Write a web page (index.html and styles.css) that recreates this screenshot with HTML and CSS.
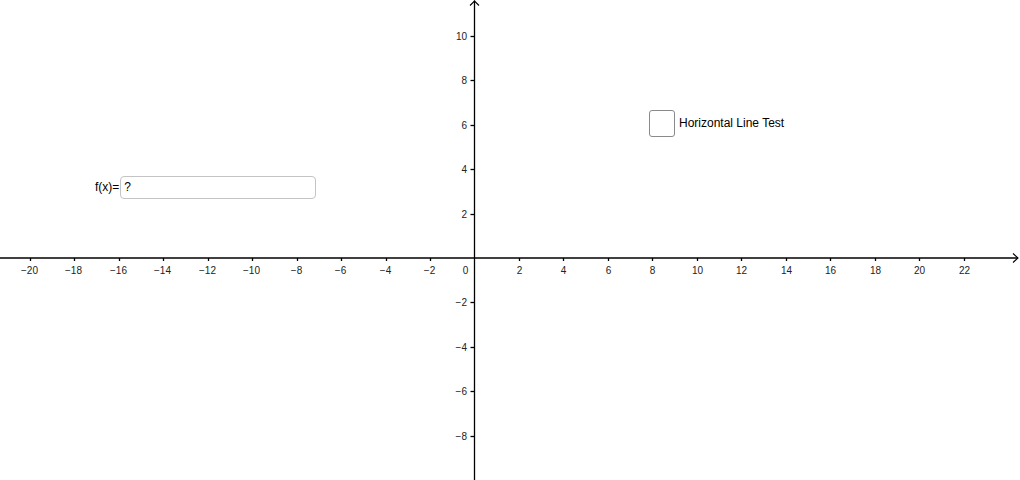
FILE: index.html
```html
<!DOCTYPE html>
<html>
<head>
<meta charset="utf-8">
<link rel="stylesheet" href="styles.css">
</head>
<body>
<div class="applet">
  <svg class="graph" width="1020" height="480" viewBox="0 0 1020 480" xmlns="http://www.w3.org/2000/svg">
    <g class="axes">
      <line x1="0" y1="258" x2="1018" y2="258"/>
      <line x1="474.5" y1="0.5" x2="474.5" y2="480"/>
      <polyline points="1013,253.5 1018,258 1013,262.5" class="arrow"/>
      <polyline points="470,5.5 474.5,1 479,5.5" class="arrow"/>
    </g>
    <g class="ticks" id="ticks"></g>
    <g class="labels" id="labels"></g>
  </svg>

  <div class="input-widget">
    <span class="input-label">f(x)=</span>
    <div class="input-box">?</div>
  </div>

  <label class="check-widget">
    <span class="check-box"></span>
    <span class="check-label">Horizontal Line Test</span>
  </label>
</div>
<script src="script.js"></script>
</body>
</html>
```

FILE: script.js
```js
(function () {
  var ns = "http://www.w3.org/2000/svg";
  var ox = 474.5, oy = 258, u = 22.23;
  var ticks = document.getElementById("ticks");
  var labels = document.getElementById("labels");
  function line(x1, y1, x2, y2) {
    var l = document.createElementNS(ns, "line");
    l.setAttribute("x1", x1); l.setAttribute("y1", y1);
    l.setAttribute("x2", x2); l.setAttribute("y2", y2);
    ticks.appendChild(l);
  }
  function text(x, y, s, anchor) {
    var t = document.createElementNS(ns, "text");
    t.setAttribute("x", x); t.setAttribute("y", y);
    t.setAttribute("text-anchor", anchor);
    t.textContent = s;
    labels.appendChild(t);
  }
  function fmt(v) { return v < 0 ? "\u2212" + (-v) : String(v); }
  for (var k = -20; k <= 22; k += 2) {
    if (k === 0) continue;
    var x = Math.round(ox + k * u) + 0.5;
    line(x, oy, x, oy + 3);
    text(x - (k < 0 ? 1 : 0), oy + 16, fmt(k), "middle");
  }
  for (var j = -8; j <= 10; j += 2) {
    if (j === 0) continue;
    var y = Math.round(oy - j * u) + 0.5;
    line(ox - 4, y, ox, y);
    text(ox - 7.5, y + 3.5, fmt(j), "end");
  }
  text(465.5, oy + 16, "0", "middle");
})();
```

FILE: styles.css
```css
html, body {
  margin: 0;
  padding: 0;
  background: #ffffff;
}

.applet {
  position: relative;
  width: 1020px;
  height: 480px;
  overflow: hidden;
  background: #ffffff;
  font-family: "Liberation Sans", Arial, sans-serif;
}

.graph {
  display: block;
}

.axes line,
.ticks line {
  stroke: #000000;
  stroke-width: 1.3;
  fill: none;
}

.arrow {
  stroke: #000000;
  stroke-width: 1.1;
  fill: none;
}

.labels text {
  font-family: "Liberation Sans", Arial, sans-serif;
  font-size: 10px;
  fill: #222222;
}

.input-widget {
  position: absolute;
  left: 95px;
  top: 175px;
  display: flex;
  align-items: center;
  gap: 1px;
  font-size: 12px;
  color: #000000;
}

.input-label {
  line-height: 24px;
}

.input-box {
  box-sizing: border-box;
  width: 196px;
  height: 23px;
  border: 1px solid #c4c4c4;
  border-radius: 4px;
  padding: 0 0 0 3px;
  line-height: 21px;
  background: #ffffff;
}

.check-widget {
  position: absolute;
  left: 649px;
  top: 109px;
  display: flex;
  align-items: center;
  gap: 4px;
  font-size: 12px;
  color: #000000;
}

.check-box {
  box-sizing: border-box;
  width: 26px;
  height: 27px;
  border: 1px solid #8a8a8a;
  border-radius: 3px;
  background: #ffffff;
}

.check-label {
  line-height: 27px;
  padding-top: 1px;
}
```
